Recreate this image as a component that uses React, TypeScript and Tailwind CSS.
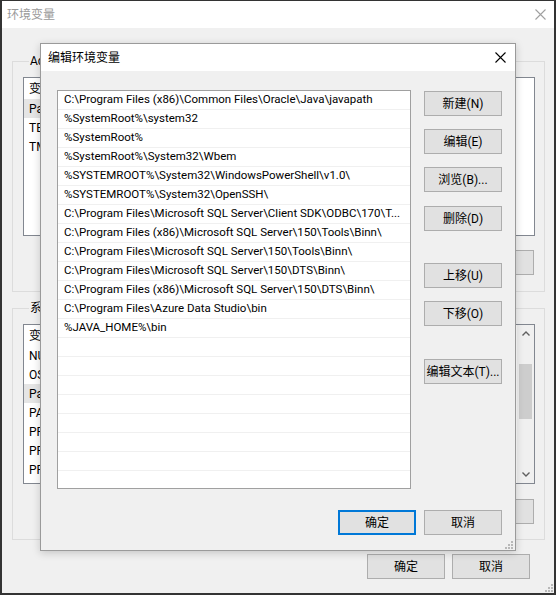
import React from "react";

const FONT = "font-['Segoe_UI','Roboto','Noto_Sans_CJK_SC',sans-serif]";

const paths = [
  "C:\\Program Files (x86)\\Common Files\\Oracle\\Java\\javapath",
  "%SystemRoot%\\system32",
  "%SystemRoot%",
  "%SystemRoot%\\System32\\Wbem",
  "%SYSTEMROOT%\\System32\\WindowsPowerShell\\v1.0\\",
  "%SYSTEMROOT%\\System32\\OpenSSH\\",
  "C:\\Program Files\\Microsoft SQL Server\\Client SDK\\ODBC\\170\\T...",
  "C:\\Program Files (x86)\\Microsoft SQL Server\\150\\Tools\\Binn\\",
  "C:\\Program Files\\Microsoft SQL Server\\150\\Tools\\Binn\\",
  "C:\\Program Files\\Microsoft SQL Server\\150\\DTS\\Binn\\",
  "C:\\Program Files (x86)\\Microsoft SQL Server\\150\\DTS\\Binn\\",
  "C:\\Program Files\\Azure Data Studio\\bin",
  "%JAVA_HOME%\\bin",
];

const userVars = [
  { name: "Path", value: "%USERPROFILE%\\AppData\\Local\\Microsoft\\WindowsApps", sel: true },
  { name: "TEMP", value: "%USERPROFILE%\\AppData\\Local\\Temp" },
  { name: "TMP", value: "%USERPROFILE%\\AppData\\Local\\Temp" },
];

const sysVars = [
  { name: "NUMBER_OF_PROCESSORS", value: "8" },
  { name: "OS", value: "Windows_NT" },
  { name: "Path", value: "C:\\Program Files (x86)\\Common Files\\Oracle\\Java", sel: true },
  { name: "PATHEXT", value: ".COM;.EXE;.BAT;.CMD;.VBS;.VBE;.JS;.JSE;.WSF" },
  { name: "PROCESSOR_ARCHITECTURE", value: "AMD64" },
  { name: "PROCESSOR_IDENTIFIER", value: "Intel64 Family 6 Model 158 Stepping 10" },
  { name: "PROCESSOR_LEVEL", value: "6" },
];

function WinButton({ label, primary = false, className = "" }: { label: string; primary?: boolean; className?: string }) {
  return (
    <button
      className={`h-[25px] w-[78px] shrink-0 flex items-center justify-center bg-[#e1e1e1] text-[12px] text-black ${
        primary ? "border-2 border-[#0078d7]" : "border border-[#adadad]"
      } ${className}`}
    >
      {label}
    </button>
  );
}

function CloseX({ color }: { color: string }) {
  return (
    <svg width="11" height="11" viewBox="0 0 11 11">
      <path d="M0.5 0.5 L10.5 10.5 M10.5 0.5 L0.5 10.5" stroke={color} strokeWidth="1.1" />
    </svg>
  );
}

function Grip() {
  return (
    <svg width="9" height="9" viewBox="0 0 9 9">
      <rect x="7" y="1" width="2" height="2" fill="#b8b8b8" />
      <rect x="4" y="4" width="2" height="2" fill="#b8b8b8" />
      <rect x="7" y="4" width="2" height="2" fill="#b8b8b8" />
      <rect x="1" y="7" width="2" height="2" fill="#b8b8b8" />
      <rect x="4" y="7" width="2" height="2" fill="#b8b8b8" />
      <rect x="7" y="7" width="2" height="2" fill="#b8b8b8" />
    </svg>
  );
}

function VarList({ rows, height, scroll }: { rows: { name: string; value: string; sel?: boolean }[]; height: string; scroll?: boolean }) {
  return (
    <div className={`w-[512px] ${height} border border-[#828790] bg-white flex overflow-hidden`}>
      <div className="flex-1 min-w-0 overflow-hidden">
        <div className="h-[21px] flex items-center text-[12px] whitespace-nowrap">
          <span className="w-[160px] shrink-0 pl-[5px]">变量</span>
          <span className="pl-[6px]">值</span>
        </div>
        {rows.map((r) => (
          <div key={r.name} className="h-[19px] flex items-center text-[12px] whitespace-nowrap">
            <span className={`w-[160px] h-full flex items-center shrink-0 pl-[5px] ${r.sel ? "bg-[#e5e5e5]" : ""}`}>{r.name}</span>
            <span className="pl-[6px]">{r.value}</span>
          </div>
        ))}
      </div>
      {scroll && (
        <div className="w-[17px] bg-[#f0f0f0] flex flex-col items-center">
          <div className="h-[17px] flex items-center justify-center">
            <svg width="8" height="5" viewBox="0 0 8 5">
              <path d="M0.5 4.5 L4 1 L7.5 4.5" stroke="#606060" strokeWidth="1.4" fill="none" />
            </svg>
          </div>
          <div className="mt-[22px] w-[13px] h-[55px] bg-[#cdcdcd]" />
          <div className="flex-1" />
          <div className="h-[17px] flex items-center justify-center">
            <svg width="8" height="5" viewBox="0 0 8 5">
              <path d="M0.5 0.5 L4 4 L7.5 0.5" stroke="#606060" strokeWidth="1.4" fill="none" />
            </svg>
          </div>
        </div>
      )}
    </div>
  );
}

function EditDialog() {
  const rows = [...paths, ...Array(9).fill("")];
  return (
    <div className="absolute left-[38px] top-[42px] w-[476px] h-[508px] border border-[#9a9a9a] bg-[#f0f0f0] flex flex-col shadow-[0_2px_8px_rgba(0,0,0,0.18)]">
      {/* title bar */}
      <div className="h-[27px] bg-white flex items-center justify-between pl-[7px] pr-[9px]">
        <span className="text-[12px] text-black">编辑环境变量</span>
        <CloseX color="#000" />
      </div>
      <div className="flex pl-[16px] pt-[19px]">
        <div className="w-[354px] h-[399px] border border-[#a0a0a0] bg-white overflow-hidden">
          {rows.map((p, i) => (
            <div key={i} className="h-[19px] border-b border-[#f0f0f0] flex items-center pl-[6px] text-[11.5px] text-black whitespace-nowrap overflow-hidden">
              {p}
            </div>
          ))}
        </div>
        <div className="ml-[13px] pt-[1px] flex flex-col">
          <WinButton label="新建(N)" />
          <WinButton label="编辑(E)" className="mt-[13px]" />
          <WinButton label="浏览(B)..." className="mt-[13px]" />
          <WinButton label="删除(D)" className="mt-[14px]" />
          <WinButton label="上移(U)" className="mt-[32px]" />
          <WinButton label="下移(O)" className="mt-[13px]" />
          <WinButton label="编辑文本(T)..." className="mt-[33px]" />
        </div>
      </div>
      <div className="flex justify-end gap-[8px] pr-[13px] mt-[21px]">
        <WinButton label="确定" primary />
        <WinButton label="取消" />
      </div>
      <div className="absolute right-[2px] bottom-[1px]">
        <Grip />
      </div>
    </div>
  );
}

export default function App() {
  return (
    <div className={`relative w-[556px] h-[595px] overflow-hidden bg-[#f0f0f0] border-t border-l-2 border-r-2 border-b-2 border-[#333] flex flex-col ${FONT}`}>
      {/* window title */}
      <div className="h-[27px] bg-white flex items-center justify-between pl-[5px] pr-[8px] shrink-0">
        <span className="text-[12px] text-[#999]">环境变量</span>
        <CloseX color="#a0a0a0" />
      </div>
      <div className="flex flex-col pl-[10px]">
        <fieldset className="mt-[25px] w-[533px] border border-[#dcdcdc] pl-[10px] pt-[8px] pb-[16px]">
          <legend className="ml-[6px] px-[1px] text-[12px] leading-[16px]">Administrator 的用户变量(U)</legend>
          <VarList rows={userVars} height="h-[159px]" />
          <div className="flex justify-end gap-[8px] mt-[14px] pr-[10px]">
            <WinButton label="新建(N)..." />
            <WinButton label="编辑(E)..." />
            <WinButton label="删除(D)" />
          </div>
        </fieldset>
        <fieldset className="mt-[8px] w-[533px] border border-[#dcdcdc] pl-[10px] pt-[8px] pb-[15px]">
          <legend className="ml-[6px] px-[1px] text-[12px] leading-[16px]">系统变量(S)</legend>
          <VarList rows={sysVars} height="h-[160px]" scroll />
          <div className="flex justify-end gap-[8px] mt-[15px] pr-[10px]">
            <WinButton label="新建(W)..." />
            <WinButton label="编辑(I)..." />
            <WinButton label="删除(L)" />
          </div>
        </fieldset>
        <div className="flex justify-end gap-[7px] mt-[14px] pr-[24px]">
          <WinButton label="确定" />
          <WinButton label="取消" />
        </div>
      </div>
      <div className="absolute right-[1px] bottom-[1px]">
        <Grip />
      </div>
      <EditDialog />
    </div>
  );
}
